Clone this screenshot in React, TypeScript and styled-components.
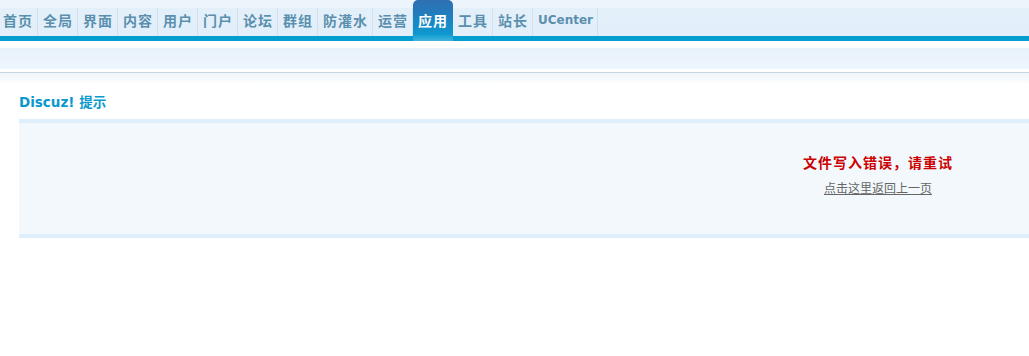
import React from 'react'
import styled, { createGlobalStyle } from 'styled-components'

const GlobalStyle = createGlobalStyle`
	html, body {
		margin: 0;
		padding: 0;
		background: #fff;
		overflow: hidden;
	}
	body {
		font: 12px "Liberation Sans", "Noto Sans CJK SC", sans-serif;
		color: #333;
	}
`

const Header = styled.div`
	height: 41px;
	display: flex;
	align-items: flex-end;
	background: linear-gradient(
		to bottom,
		#edf5fc 0,
		#edf5fc 8px,
		#e3f0fa 8px,
		#e2effa 36px,
		#049dcf 36px,
		#049dcf 41px
	);
`

const NavList = styled.ul`
	display: flex;
	align-items: flex-end;
	margin: 0 0 0 -2px;
	padding: 0;
	list-style: none;
`

const NavItem = styled.li<{ $active?: boolean; $latin?: boolean }>`
	box-sizing: border-box;
	height: ${p => (p.$active ? '41px' : '28px')};
	margin-bottom: ${p => (p.$active ? '0' : '5px')};
	padding: ${p => (p.$active ? '8px 4px 0 5px' : '0 4px 0 5px')};
	border-right: 1px solid ${p => (p.$active ? 'transparent' : '#d2e2ec')};
	border-radius: ${p => (p.$active ? '5px 5px 0 0' : '0')};
	background: ${p =>
		p.$active
			? 'linear-gradient(to bottom, #2e6fb2 0, #1c84c2 20px, #0d98cf 34px, #1aa2d4 36px, #45b2da 41px)'
			: 'none'};
	color: ${p => (p.$active ? '#fff' : '#5b8fae')};
	font-family: ${p =>
		p.$latin ? '"DejaVu Sans", sans-serif' : '"Noto Sans CJK SC", sans-serif'};
	font-size: ${p => (p.$latin ? '12px' : '14px')};
	font-weight: bold;
	letter-spacing: ${p => (p.$latin ? '0' : '1px')};
	line-height: 24px;
	white-space: nowrap;
	cursor: pointer;
`

const Gap = styled.div`
	height: 7px;
`

const SubBar = styled.div`
	height: 21px;
	background: linear-gradient(to bottom, #e8f2fb, #eef6fd);
	border-bottom: 3px solid #fff;
`

const Divider = styled.div`
	height: 1px;
	background: #c6d5df;
`

const Container = styled.div`
	padding: 0 0 0 19px;
	background: linear-gradient(to bottom, #eef4f8 0, #fff 12px);
`

const Title = styled.h3`
	margin: 0;
	padding: 19px 0 7px;
	font-family: "DejaVu Sans", "Noto Sans CJK SC", sans-serif;
	font-size: 13.5px;
	font-weight: bold;
	line-height: 20px;
	color: #0a99cc;
`

const InfoBox = styled.div`
	width: 1718px;
	box-sizing: border-box;
	padding: 30px 0 38px;
	border-top: 4px solid #deeefb;
	border-bottom: 4px solid #deeefb;
	background: #f2f8fc;
	text-align: center;
`

const ErrorText = styled.h4`
	margin: 0 0 8px;
	font-family: "Noto Sans CJK SC", sans-serif;
	font-size: 14px;
	font-weight: bold;
	letter-spacing: 1px;
	line-height: 19px;
	color: #cc0000;
`

const BackLink = styled.a`
	display: inline-block;
	font-family: "Noto Sans CJK SC", sans-serif;
	font-size: 12px;
	line-height: 16px;
	color: #666;
	text-decoration: underline;
	cursor: pointer;
`

const menu = [
	'首页',
	'全局',
	'界面',
	'内容',
	'用户',
	'门户',
	'论坛',
	'群组',
	'防灌水',
	'运营',
	'应用',
	'工具',
	'站长',
	'UCenter',
]

export default function App() {
	return (
		<>
			<GlobalStyle />
			<Header>
				<NavList>
					{menu.map(m => (
						<NavItem key={m} $active={m === '应用'} $latin={m === 'UCenter'}>
							{m}
						</NavItem>
					))}
				</NavList>
			</Header>
			<Gap />
			<SubBar />
			<Divider />
			<Container>
				<Title>Discuz! 提示</Title>
				<InfoBox>
					<ErrorText>文件写入错误，请重试</ErrorText>
					<BackLink>点击这里返回上一页</BackLink>
				</InfoBox>
			</Container>
		</>
	)
}
